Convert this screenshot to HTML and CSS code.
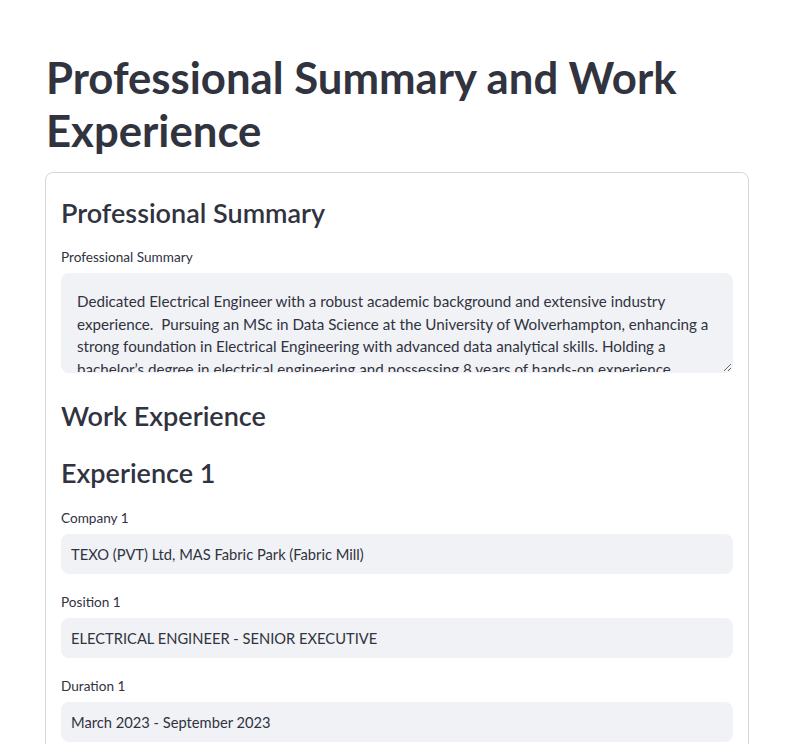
FILE: index.html
```html
<!DOCTYPE html>
<html lang="en">
<head>
<meta charset="utf-8">
<title>Professional Summary and Work Experience</title>
<link rel="stylesheet" href="styles.css">
</head>
<body>
<main class="main">
  <h1 class="page-title">Professional Summary and Work Experience</h1>
  <section class="card">
    <h3 class="subheader">Professional Summary</h3>
    <div class="field field-area">
      <label class="field-label" for="summary">Professional Summary</label>
      <textarea id="summary" class="text-area">Dedicated Electrical Engineer with a robust academic background and extensive industry experience.  Pursuing an MSc in Data Science at the University of Wolverhampton, enhancing a strong foundation in Electrical Engineering with advanced data analytical skills. Holding a bachelor’s degree in electrical engineering and possessing 8 years of hands-on experience specialising in textile manufacturing, power distribution, maintenance planning and energy management.</textarea>
    </div>
    <h3 class="subheader">Work Experience</h3>
    <h3 class="subheader">Experience 1</h3>
    <div class="field field-first">
      <label class="field-label" for="company1">Company 1</label>
      <input id="company1" class="text-input" type="text" value="TEXO (PVT) Ltd, MAS Fabric Park (Fabric Mill)">
    </div>
    <div class="field">
      <label class="field-label" for="position1">Position 1</label>
      <input id="position1" class="text-input" type="text" value="ELECTRICAL ENGINEER - SENIOR EXECUTIVE">
    </div>
    <div class="field">
      <label class="field-label" for="duration1">Duration 1</label>
      <input id="duration1" class="text-input" type="text" value="March 2023 - September 2023">
    </div>
  </section>
</main>
</body>
</html>
```
FILE: styles.css
```css
html, body {
  margin: 0;
  background: #ffffff;
}
body {
  font-family: "Lato", "Liberation Sans", sans-serif;
  color: rgb(49, 51, 63);
}
.main {
  width: 704px;
  padding: 31px 0 40px 45px;
}
.page-title {
  margin: 0;
  padding: 20px 0 15px 1px;
  font-size: 43.7px;
  line-height: 52.8px;
  font-weight: 700;
  letter-spacing: 0;
}
.card {
  border: 1px solid rgba(49, 51, 63, 0.2);
  border-radius: 8px;
  padding: 16px 15px 16px 15px;
  display: flex;
  flex-direction: column;
  gap: 16px;
}
.subheader {
  margin: 0;
  padding: 7px 0 0;
  font-size: 27px;
  line-height: 33.6px;
  font-weight: 600;
}
.field {
  display: flex;
  flex-direction: column;
}
.field-area {
  margin-bottom: 3px;
}
.field-first {
  margin-top: 1px;
}
.field-label {
  display: flex;
  align-items: center;
  height: 24px;
  margin-bottom: 4px;
  font-size: 13.6px;
}
.text-input,
.text-area {
  box-sizing: border-box;
  width: 100%;
  margin: 0;
  border: 1px solid transparent;
  border-radius: 8px;
  background: rgb(240, 242, 246);
  color: rgb(49, 51, 63);
  font-family: "Lato", "Liberation Sans", sans-serif;
  outline: none;
}
.text-input {
  height: 40px;
  padding: 0 9px;
  font-size: 14.7px;
}
.text-area {
  display: block;
  height: 100px;
  padding: 16px 15px;
  font-size: 15.2px;
  line-height: 22.6px;
  overflow: hidden;
  resize: vertical;
}
```
